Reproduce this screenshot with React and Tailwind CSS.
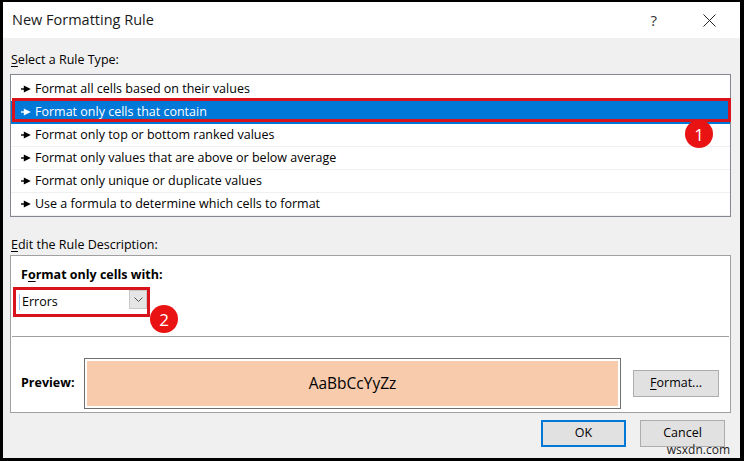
import React from 'react';

const rules = [
  'Format all cells based on their values',
  'Format only cells that contain',
  'Format only top or bottom ranked values',
  'Format only values that are above or below average',
  'Format only unique or duplicate values',
  'Use a formula to determine which cells to format',
];

function Pointer({ color }) {
  return (
    <svg width="10" height="8" viewBox="0 0 10 8" className="shrink-0">
      <rect x="0" y="3.3" width="4" height="1.4" fill={color} />
      <polygon points="2.8,0.6 9.8,4 2.8,7.4" fill={color} />
    </svg>
  );
}

function Badge({ n, className }) {
  return (
    <div className={'absolute w-[28px] h-[28px] rounded-full bg-[#ea1313] text-white flex items-center justify-center text-[17px] leading-none ' + className}>
      {n}
    </div>
  );
}

export default function App() {
  return (
    <div
      className="relative w-[744px] h-[461px] bg-black pt-[2px] pl-[3px] pr-[4px] pb-[3px] text-black"
      style={{ fontFamily: '"Open Sans", "Noto Sans", sans-serif' }}
    >
      <div className="h-full flex flex-col bg-[#f0f0f0]">
        {/* title bar */}
        <div className="h-[36px] shrink-0 bg-white flex items-center pl-[9px]">
          <span className="text-[14.5px] text-[#1a1a1a]">New Formatting Rule</span>
          <span className="ml-auto mr-[46px] text-[15px] text-[#333]">?</span>
          <svg width="13" height="13" viewBox="0 0 13 13" className="mr-[24px]">
            <path d="M0.5 0.5 L12.5 12.5 M12.5 0.5 L0.5 12.5" stroke="#222" strokeWidth="1" />
          </svg>
        </div>

        <div className="pt-[14px] pl-[8px] text-[12.5px] leading-[16px]">
          <span className="underline underline-offset-2">S</span>elect a Rule Type:
        </div>

        {/* rule list */}
        <div className="relative mt-[6px] ml-[7px] mr-[9px] border border-[#828790] bg-white pt-[3px] text-[12.5px]">
          {rules.map((r, i) =>
            i === 1 ? (
              <div key={r} className="relative h-[23px] flex items-center gap-[4px] pl-[10px] bg-[#0078d7] text-white border-b border-[#0078d7]">
                <Pointer color="#fff" />
                <span>{r}</span>
                <div className="absolute -top-[3px] bottom-[1px] left-[1px] -right-[1px] border-[3px] border-[#d8131c]" />
              </div>
            ) : (
              <div key={r} className="h-[23px] flex items-center gap-[4px] pl-[10px] border-b border-[#f0f0f0] last:border-b-0">
                <Pointer color="#000" />
                <span>{r}</span>
              </div>
            )
          )}
          <Badge n="1" className="left-[674px] top-[45px]" />
        </div>

        <div className="pt-[20px] pl-[8px] text-[12.5px] leading-[16px]">
          <span className="underline underline-offset-2">E</span>dit the Rule Description:
        </div>

        {/* description box */}
        <div className="relative mt-[2px] ml-[7px] mr-[9px] border border-[#a0a0a0] bg-white">
          <div className="pt-[11px] pl-[10px] text-[12.5px] leading-[16px] font-bold">
            F<span className="underline underline-offset-2">o</span>rmat only cells with:
          </div>
          <div className="mt-[4px] ml-[2px] w-[137px] h-[30px] border-[3px] border-[#d8131c] bg-white flex items-start">
            <div className="flex-1 h-full flex items-center pl-[3px] text-[12.5px]">
              <span className="w-px h-[16px] bg-[#9cc7ef] mr-[2px]" />
              Errors
            </div>
            <div className="w-[18px] h-[19px] bg-[#e5e5e5] border border-[#c8c8c8] flex items-center justify-center">
              <svg width="9" height="5" viewBox="0 0 9 5">
                <path d="M0.5 0.5 L4.5 4.5 L8.5 0.5" fill="none" stroke="#555" strokeWidth="1" />
              </svg>
            </div>
          </div>
          <div className="mt-[19px] mx-[1px] h-px bg-[#a0a0a0]" />
          <div className="mt-[21px] pb-[3px] flex items-center">
            <div className="w-[73px] pl-[10px] text-[12.5px] font-bold">Preview:</div>
            <div className="w-[537px] h-[51px] border border-[#707070] p-[2px] bg-white">
              <div className="h-full bg-[#f8cbad] flex items-center justify-center text-[15.5px]">AaBbCcYyZz</div>
            </div>
            <div className="ml-[12px] w-[86px] h-[27px] border border-[#adadad] bg-[#e1e1e1] flex items-center justify-center text-[12.5px]">
              <span className="underline underline-offset-2">F</span>ormat...
            </div>
          </div>
          <Badge n="2" className="left-[139px] top-[49px]" />
        </div>

        {/* footer buttons */}
        <div className="mt-[7px] flex justify-end gap-[14px] pr-[15px]">
          <div className="w-[85px] h-[27px] border-2 border-[#0078d7] bg-[#e1e1e1] flex items-center justify-center text-[12.5px]">OK</div>
          <div className="w-[85px] h-[27px] border border-[#adadad] bg-[#e1e1e1] flex items-center justify-center text-[12.5px]">Cancel</div>
        </div>
      </div>

      <div className="absolute right-[14px] bottom-[5px] text-[12px] leading-none text-[#222]">wsxdn.com</div>
    </div>
  );
}
